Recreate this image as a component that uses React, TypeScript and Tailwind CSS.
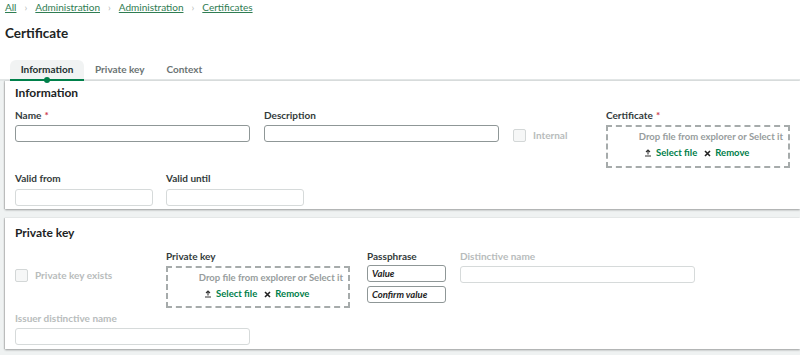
const green = "text-[#00804a]";

function Label({ text, required, muted }: { text: string; required?: boolean; muted?: boolean }) {
  return (
    <div className={`h-[12px] text-[10px] leading-[12px] font-bold ${muted ? "text-[#b8bcbc]" : "text-[#333b3b]"}`}>
      {text}
      {required && <span className="ml-[3px] text-[#cc3a4e]">*</span>}
    </div>
  );
}

function Input({ w, faint, placeholder }: { w: string; faint?: boolean; placeholder?: string }) {
  return (
    <div
      className={`${w} h-[17px] rounded-[3px] border bg-white px-[4px] text-[9.5px] leading-[15px] font-bold italic text-[#222] ${
        faint ? "border-[#d6dada]" : "border-[#8f9797]"
      }`}
    >
      {placeholder}
    </div>
  );
}

function Dropzone({ h }: { h: string }) {
  return (
    <div className={`w-[184px] ${h} border-2 border-dashed border-[#a6abab] pr-[5px] pt-[4px]`}>
      <div className="text-right text-[9.5px] leading-[12px] font-bold text-[#979d9d]">
        Drop file from explorer or Select it
      </div>
      <div className="mt-[4px] flex items-center pl-[36px] text-[9.5px] leading-[12px] font-bold">
        <svg width="8" height="8" viewBox="0 0 8 8" className="mr-[4px]">
          <path d="M4 1 L4 5.5 M2 3 L4 1 L6 3 M1 7 L7 7" stroke="#333" strokeWidth="1.1" fill="none" />
        </svg>
        <span className={green}>Select file</span>
        <svg width="7" height="7" viewBox="0 0 7 7" className="ml-[7px] mr-[4px]">
          <path d="M1 1 L6 6 M6 1 L1 6" stroke="#222" strokeWidth="1.6" />
        </svg>
        <span className={green}>Remove</span>
      </div>
    </div>
  );
}

function Checkbox({ text }: { text: string }) {
  return (
    <div className="flex items-center">
      <div className="h-[13px] w-[13px] rounded-[2px] border border-[#d3d7d7] bg-[#f6f7f7]" />
      <span className="ml-[7px] text-[10px] font-bold text-[#b8bcbc]">{text}</span>
    </div>
  );
}

export default function App() {
  return (
    <div
      className="h-[355px] w-[800px] overflow-hidden bg-white"
      style={{ fontFamily: "Lato, 'Open Sans', sans-serif" }}
    >
      {/* breadcrumb */}
      <div className="flex h-[14px] items-center pl-[5px] text-[10px] leading-[14px] text-[#2f7d52]">
        <span className="underline">All</span>
        <span className="mx-[8px] text-[#b5b9b9]">›</span>
        <span className="underline">Administration</span>
        <span className="mx-[8px] text-[#b5b9b9]">›</span>
        <span className="underline">Administration</span>
        <span className="mx-[8px] text-[#b5b9b9]">›</span>
        <span className="underline">Certificates</span>
      </div>

      <div className="mt-[11px] h-[16px] pl-[5px] text-[13.5px] leading-[16px] font-bold text-[#1d2424]">
        Certificate
      </div>

      {/* tabs */}
      <div className="mt-[19px] flex h-[21px] border-b-2 border-[#e2e6e6] pl-[10px] text-[10px] font-bold">
        <div className="relative flex w-[74px] items-center justify-center rounded-t-[6px] bg-[#f1f3f3] text-[#233030]">
          Information
          <div className="absolute bottom-[-2px] left-0 right-0 h-[2px] bg-[#00804a]" />
          <div className="absolute bottom-[-4px] left-[34px] h-[6px] w-[6px] rounded-full bg-[#00804a]" />
        </div>
        <div className="flex items-center px-[11px] text-[#6b7474]">Private key</div>
        <div className="flex items-center px-[11px] text-[#6b7474]">Context</div>
      </div>

      {/* content */}
      <div className="bg-[#eff2f2] pl-[5px]">
        {/* Information card */}
        <div className="h-[128px] bg-white pl-[10px] shadow-[0_1px_2px_rgba(0,0,0,0.35),-1px_0_1px_rgba(0,0,0,0.12)]">
          <div className="pt-[5px] text-[12px] leading-[14px] font-bold text-[#1d2424]">Information</div>
          <div className="mt-[9px] flex">
            <div className="w-[249px]">
              <Label text="Name" required />
              <div className="mt-[4px]">
                <Input w="w-[235px]" />
              </div>
            </div>
            <div className="w-[249px]">
              <Label text="Description" />
              <div className="mt-[4px]">
                <Input w="w-[235px]" />
              </div>
            </div>
            <div className="w-[93px] pt-[19px]">
              <Checkbox text="Internal" />
            </div>
            <div>
              <Label text="Certificate" required />
              <div className="mt-[4px]">
                <Dropzone h="h-[43px]" />
              </div>
            </div>
          </div>
          <div className="mt-[4px] flex">
            <div className="w-[151px]">
              <Label text="Valid from" />
              <div className="mt-[5px]">
                <Input w="w-[138px]" faint />
              </div>
            </div>
            <div>
              <Label text="Valid until" />
              <div className="mt-[5px]">
                <Input w="w-[138px]" faint />
              </div>
            </div>
          </div>
        </div>

        <div className="h-[9px]" />

        {/* Private key card */}
        <div className="h-[131px] bg-white pl-[10px] shadow-[0_1px_2px_rgba(0,0,0,0.35),-1px_0_1px_rgba(0,0,0,0.12)]">
          <div className="pt-[8px] text-[12px] leading-[14px] font-bold text-[#1d2424]">Private key</div>
          <div className="mt-[10px] flex">
            <div className="w-[151px] pt-[18px]">
              <Checkbox text="Private key exists" />
            </div>
            <div className="w-[201px]">
              <Label text="Private key" />
              <div className="mt-[4px]">
                <Dropzone h="h-[42px]" />
              </div>
            </div>
            <div className="w-[93px]">
              <Label text="Passphrase" />
              <div className="mt-[3px] flex flex-col gap-[4px]">
                <Input w="w-[79px]" placeholder="Value" />
                <Input w="w-[79px]" placeholder="Confirm value" />
              </div>
            </div>
            <div>
              <Label text="Distinctive name" muted />
              <div className="mt-[4px]">
                <Input w="w-[235px]" faint />
              </div>
            </div>
          </div>
          <div className="mt-[4px]">
            <Label text="Issuer distinctive name" muted />
            <div className="mt-[4px]">
              <Input w="w-[235px]" faint />
            </div>
          </div>
        </div>
        <div className="h-[10px]" />
      </div>
    </div>
  );
}
